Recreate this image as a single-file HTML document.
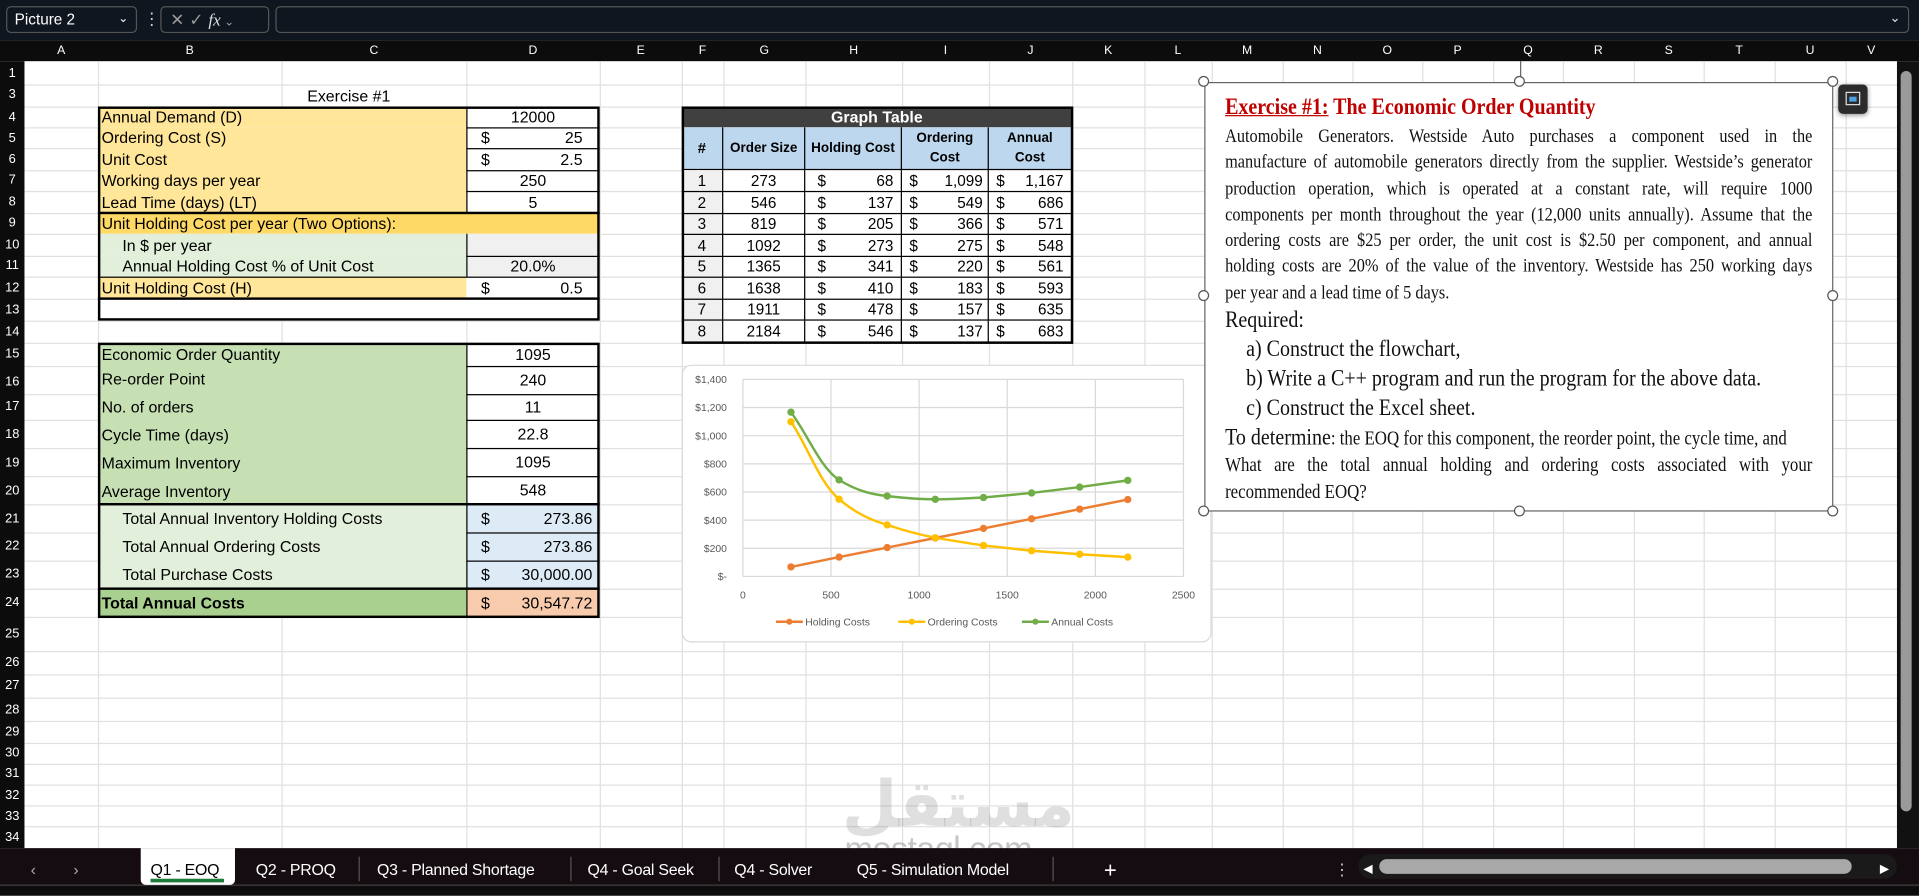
<!DOCTYPE html>
<html><head><meta charset="utf-8">
<style>
*{margin:0;padding:0;box-sizing:border-box}
body{width:1919px;height:896px;overflow:hidden;background:#fff;font-family:"Liberation Sans",Arial,sans-serif}
#w{position:absolute;left:0;top:0;width:1568px;height:732px;transform:scale(1.22385);transform-origin:0 0;background:#fff;overflow:hidden}
.a{position:absolute}
.vl{position:absolute;top:50px;height:643px;width:1px;background:#e0e0e0}
.hl{position:absolute;left:20px;width:1530px;height:1px;background:#e0e0e0}
.ch{position:absolute;top:33px;height:17px;color:#fff;font-size:10px;text-align:center;line-height:17px}
.rh{position:absolute;left:0;width:20px;color:#fff;font-size:10.5px;text-align:center}
.c{position:absolute;font-size:13px;color:#000;display:flex;align-items:center;padding:0 3px;white-space:nowrap;overflow:hidden}
.ctr{justify-content:center}
.cur{justify-content:space-between;padding:0 14px 0 12px}
.g{position:absolute;font-size:12.5px;display:flex;align-items:center;white-space:nowrap;border-right:1px solid #000;border-bottom:1px solid #000}
.j{text-align:justify;text-align-last:justify;width:558px}
.hd{position:absolute;width:9px;height:9px;border:1.5px solid #555;border-radius:50%;background:#fff}
.tab{position:absolute;top:700px;color:#fff;font-size:13px;height:22px;line-height:22px;letter-spacing:-0.2px}
</style></head><body><div id="w">

<div class="a" style="left:0;top:0;width:1568px;height:33px;background:#0f1620"></div>
<div class="a" style="left:5px;top:5px;width:107px;height:22px;border:1px solid #555;border-radius:4px;color:#fff;font-size:12.5px;line-height:20px;padding-left:6px">Picture 2<span style="position:absolute;right:6px;top:0;font-size:10px">&#8964;</span></div>
<div class="a" style="left:117px;top:7px;color:#ccc;font-size:14px">&#8942;</div>
<div class="a" style="left:131px;top:5px;width:89px;height:22px;border:1px solid #555;border-radius:4px;color:#999;font-size:14px;line-height:20px;padding-left:7px">✕ ✓ <i style="font-family:'Liberation Serif',serif;color:#ddd">fx</i><span style="font-size:10px"> &#8964;</span></div>
<div class="a" style="left:225px;top:5px;width:1335px;height:22px;border:1px solid #555;border-radius:4px"><span style="position:absolute;right:6px;top:2px;color:#ddd;font-size:11px">&#8964;</span></div>

<div class="a" style="left:0;top:33px;width:1568px;height:17px;background:#0c0c0c"></div>
<div class="a" style="left:0;top:50px;width:20px;height:643px;background:#0c0c0c"></div>
<div class="ch" style="left:20px;width:60px">A</div>
<div class="ch" style="left:80px;width:150px">B</div>
<div class="ch" style="left:230px;width:151px">C</div>
<div class="ch" style="left:381px;width:109px">D</div>
<div class="ch" style="left:490px;width:67px">E</div>
<div class="ch" style="left:557px;width:34px">F</div>
<div class="ch" style="left:591px;width:67px">G</div>
<div class="ch" style="left:658px;width:79px">H</div>
<div class="ch" style="left:737px;width:71px">I</div>
<div class="ch" style="left:808px;width:68px">J</div>
<div class="ch" style="left:876px;width:59px">K</div>
<div class="ch" style="left:935px;width:55px">L</div>
<div class="ch" style="left:990px;width:58px">M</div>
<div class="ch" style="left:1048px;width:57px">N</div>
<div class="ch" style="left:1105px;width:57px">O</div>
<div class="ch" style="left:1162px;width:58px">P</div>
<div class="ch" style="left:1220px;width:57px">Q</div>
<div class="ch" style="left:1277px;width:58px">R</div>
<div class="ch" style="left:1335px;width:57px">S</div>
<div class="ch" style="left:1392px;width:58px">T</div>
<div class="ch" style="left:1450px;width:58px">U</div>
<div class="ch" style="left:1508px;width:42px">V</div>

<div class="vl" style="left:80px"></div><div class="vl" style="left:230px"></div><div class="vl" style="left:381px"></div><div class="vl" style="left:490px"></div><div class="vl" style="left:557px"></div><div class="vl" style="left:591px"></div><div class="vl" style="left:658px"></div><div class="vl" style="left:737px"></div><div class="vl" style="left:808px"></div><div class="vl" style="left:876px"></div><div class="vl" style="left:935px"></div><div class="vl" style="left:990px"></div><div class="vl" style="left:1048px"></div><div class="vl" style="left:1105px"></div><div class="vl" style="left:1162px"></div><div class="vl" style="left:1220px"></div><div class="vl" style="left:1277px"></div><div class="vl" style="left:1335px"></div><div class="vl" style="left:1392px"></div><div class="vl" style="left:1450px"></div><div class="vl" style="left:1508px"></div>
<div class="hl" style="top:69px"></div><div class="hl" style="top:87px"></div><div class="hl" style="top:104px"></div><div class="hl" style="top:121px"></div><div class="hl" style="top:139px"></div><div class="hl" style="top:156px"></div><div class="hl" style="top:174px"></div><div class="hl" style="top:191px"></div><div class="hl" style="top:209px"></div><div class="hl" style="top:226px"></div><div class="hl" style="top:244px"></div><div class="hl" style="top:262px"></div><div class="hl" style="top:280px"></div><div class="hl" style="top:299px"></div><div class="hl" style="top:322px"></div><div class="hl" style="top:343px"></div><div class="hl" style="top:366px"></div><div class="hl" style="top:389px"></div><div class="hl" style="top:412px"></div><div class="hl" style="top:435px"></div><div class="hl" style="top:458px"></div><div class="hl" style="top:481px"></div><div class="hl" style="top:504px"></div><div class="hl" style="top:532px"></div><div class="hl" style="top:551px"></div><div class="hl" style="top:570px"></div><div class="hl" style="top:589px"></div><div class="hl" style="top:607px"></div><div class="hl" style="top:624px"></div><div class="hl" style="top:641px"></div><div class="hl" style="top:658px"></div><div class="hl" style="top:675px"></div>

<div class="rh" style="top:54px">1</div><div class="rh" style="top:71px">3</div><div class="rh" style="top:90px">4</div><div class="rh" style="top:107px">5</div><div class="rh" style="top:124px">6</div><div class="rh" style="top:141px">7</div><div class="rh" style="top:159px">8</div><div class="rh" style="top:176px">9</div><div class="rh" style="top:194px">10</div><div class="rh" style="top:211px">11</div><div class="rh" style="top:229px">12</div><div class="rh" style="top:247px">13</div><div class="rh" style="top:265px">14</div><div class="rh" style="top:283px">15</div><div class="rh" style="top:306px">16</div><div class="rh" style="top:326px">17</div><div class="rh" style="top:349px">18</div><div class="rh" style="top:372px">19</div><div class="rh" style="top:395px">20</div><div class="rh" style="top:418px">21</div><div class="rh" style="top:440px">22</div><div class="rh" style="top:463px">23</div><div class="rh" style="top:486px">24</div><div class="rh" style="top:512px">25</div><div class="rh" style="top:535px">26</div><div class="rh" style="top:554px">27</div><div class="rh" style="top:574px">28</div><div class="rh" style="top:592px">29</div><div class="rh" style="top:609px">30</div><div class="rh" style="top:626px">31</div><div class="rh" style="top:644px">32</div><div class="rh" style="top:661px">33</div><div class="rh" style="top:678px">34</div>

<div class="c ctr" style="left:80px;top:69px;width:410px;height:18px">Exercise #1</div>

<div class="a" style="left:80px;top:87px;width:410px;height:175px;background:#fff"></div>
<div class="c" style="left:80px;top:87px;width:301px;height:17px;background:#ffe699">Annual Demand (D)</div>
<div class="c" style="left:80px;top:104px;width:301px;height:17px;background:#ffe699">Ordering Cost (S)</div>
<div class="c" style="left:80px;top:121px;width:301px;height:18px;background:#ffe699">Unit Cost</div>
<div class="c" style="left:80px;top:139px;width:301px;height:17px;background:#ffe699">Working days per year</div>
<div class="c" style="left:80px;top:156px;width:301px;height:18px;background:#ffe699">Lead Time (days) (LT)</div>
<div class="c" style="left:80px;top:174px;width:410px;height:17px;background:#ffd966">Unit Holding Cost per year (Two Options):</div>
<div class="c" style="left:80px;top:191px;width:301px;height:18px;background:#e2efda;padding-left:20px">In $ per year</div>
<div class="c" style="left:80px;top:209px;width:301px;height:17px;background:#e2efda;padding-left:20px">Annual Holding Cost % of Unit Cost</div>
<div class="c" style="left:80px;top:226px;width:301px;height:18px;background:#ffe699">Unit Holding Cost (H)</div>
<div class="c ctr" style="left:381px;top:87px;width:109px;height:17px">12000</div>
<div class="c cur" style="left:381px;top:104px;width:109px;height:17px"><span>$</span><span>25</span></div>
<div class="c cur" style="left:381px;top:121px;width:109px;height:18px"><span>$</span><span>2.5</span></div>
<div class="c ctr" style="left:381px;top:139px;width:109px;height:17px">250</div>
<div class="c ctr" style="left:381px;top:156px;width:109px;height:18px">5</div>
<div class="c" style="left:381px;top:191px;width:109px;height:18px;background:#f0f0f0"></div>
<div class="c ctr" style="left:381px;top:209px;width:109px;height:17px;background:#f0f0f0">20.0%</div>
<div class="c cur" style="left:381px;top:226px;width:109px;height:18px"><span>$</span><span>0.5</span></div>
<div class="a" style="left:381px;top:87px;width:1px;height:87px;background:#000"></div>
<div class="a" style="left:381px;top:191px;width:1px;height:35px;background:#000"></div>
<div class="a" style="left:381px;top:104px;width:109px;height:1px;background:#000"></div>
<div class="a" style="left:381px;top:121px;width:109px;height:1px;background:#000"></div>
<div class="a" style="left:381px;top:139px;width:109px;height:1px;background:#000"></div>
<div class="a" style="left:381px;top:156px;width:109px;height:1px;background:#000"></div>
<div class="a" style="left:80px;top:173px;width:410px;height:2px;background:#000"></div>
<div class="a" style="left:381px;top:209px;width:109px;height:1px;background:#000"></div>
<div class="a" style="left:80px;top:226px;width:410px;height:1px;background:#000"></div>
<div class="a" style="left:80px;top:243px;width:410px;height:2px;background:#000"></div>
<div class="a" style="left:80px;top:87px;width:410px;height:175px;border:2px solid #000"></div>

<div class="a" style="left:80px;top:280px;width:301px;height:132px;background:#c6e0b4"></div>
<div class="c" style="left:80px;top:280px;width:301px;height:19px">Economic Order Quantity</div>
<div class="c" style="left:80px;top:299px;width:301px;height:20px">Re-order Point</div>
<div class="c" style="left:80px;top:322px;width:301px;height:20px">No. of orders</div>
<div class="c" style="left:80px;top:345px;width:301px;height:20px">Cycle Time (days)</div>
<div class="c" style="left:80px;top:368px;width:301px;height:20px">Maximum Inventory</div>
<div class="c" style="left:80px;top:391px;width:301px;height:20px">Average Inventory</div>
<div class="c ctr" style="left:381px;top:280px;width:109px;height:19px">1095</div>
<div class="c ctr" style="left:381px;top:299px;width:109px;height:23px">240</div>
<div class="c ctr" style="left:381px;top:322px;width:109px;height:21px">11</div>
<div class="c ctr" style="left:381px;top:343px;width:109px;height:23px">22.8</div>
<div class="c ctr" style="left:381px;top:366px;width:109px;height:23px">1095</div>
<div class="c ctr" style="left:381px;top:389px;width:109px;height:23px">548</div>
<div class="a" style="left:80px;top:412px;width:301px;height:69px;background:#e2efda"></div>
<div class="c" style="left:80px;top:412px;width:301px;height:22px;padding-left:20px">Total Annual Inventory Holding Costs</div>
<div class="c" style="left:80px;top:435px;width:301px;height:22px;padding-left:20px">Total Annual Ordering Costs</div>
<div class="c" style="left:80px;top:458px;width:301px;height:22px;padding-left:20px">Total Purchase Costs</div>
<div class="c cur" style="left:381px;top:412px;width:109px;height:23px;background:#ddebf7;padding-right:6px"><span>$</span><span>273.86</span></div>
<div class="c cur" style="left:381px;top:435px;width:109px;height:23px;background:#ddebf7;padding-right:6px"><span>$</span><span>273.86</span></div>
<div class="c cur" style="left:381px;top:458px;width:109px;height:23px;background:#ddebf7;padding-right:6px"><span>$</span><span>30,000.00</span></div>
<div class="c" style="left:80px;top:481px;width:301px;height:23px;background:#a9d08e;font-weight:bold">Total Annual Costs</div>
<div class="c cur" style="left:381px;top:481px;width:109px;height:23px;background:#f8cbad;padding-right:6px"><span>$</span><span>30,547.72</span></div>
<div class="a" style="left:381px;top:280px;width:1px;height:224px;background:#000"></div>
<div class="a" style="left:381px;top:299px;width:109px;height:1px;background:#000"></div>
<div class="a" style="left:381px;top:322px;width:109px;height:1px;background:#000"></div>
<div class="a" style="left:381px;top:343px;width:109px;height:1px;background:#000"></div>
<div class="a" style="left:381px;top:366px;width:109px;height:1px;background:#000"></div>
<div class="a" style="left:381px;top:389px;width:109px;height:1px;background:#000"></div>
<div class="a" style="left:80px;top:411px;width:410px;height:2px;background:#000"></div>
<div class="a" style="left:381px;top:435px;width:109px;height:1px;background:#000"></div>
<div class="a" style="left:381px;top:458px;width:109px;height:1px;background:#000"></div>
<div class="a" style="left:80px;top:480px;width:410px;height:2px;background:#000"></div>
<div class="a" style="left:80px;top:280px;width:410px;height:225px;border:2px solid #000"></div>

<div class="a" style="left:557px;top:87px;width:319px;height:193px;background:#fff"></div>
<div class="a" style="left:557px;top:87px;width:319px;height:17px;background:#404040;color:#fff;font-weight:bold;font-size:13px;text-align:center;line-height:17px">Graph Table</div>
<div class="a" style="left:557px;top:104px;width:319px;height:35px;background:#bdd7ee"></div>
<div class="g" style="left:557px;top:104px;width:34px;height:35px;justify-content:center;font-weight:bold;font-size:12px">#</div>
<div class="g" style="left:591px;top:104px;width:67px;height:35px;justify-content:center;font-weight:bold;font-size:11px">Order Size</div>
<div class="g" style="left:658px;top:104px;width:79px;height:35px;justify-content:center;font-weight:bold;font-size:11px">Holding Cost</div>
<div class="g" style="left:737px;top:104px;width:71px;height:35px;justify-content:center;font-weight:bold;font-size:11px;text-align:center;white-space:normal;line-height:16px">Ordering Cost</div>
<div class="g" style="left:808px;top:104px;width:68px;height:35px;justify-content:center;font-weight:bold;font-size:11px;text-align:center;white-space:normal;line-height:16px;padding:0 12px">Annual Cost</div>

<div class="a" style="left:557px;top:139px;width:34px;height:141px;background:#f0f0f0"></div>
<div class="g" style="left:557px;top:139px;width:34px;height:18px;justify-content:center">1</div><div class="g" style="left:591px;top:139px;width:67px;height:18px;justify-content:center">273</div><div class="g" style="left:658px;top:139px;width:79px;height:18px;justify-content:space-between;padding:0 6px 0 10px"><span>$</span><span>68</span></div><div class="g" style="left:737px;top:139px;width:71px;height:18px;justify-content:space-between;padding:0 4px 0 6px"><span>$</span><span>1,099</span></div><div class="g" style="left:808px;top:139px;width:68px;height:18px;justify-content:space-between;padding:0 6px 0 6px"><span>$</span><span>1,167</span></div>
<div class="g" style="left:557px;top:157px;width:34px;height:18px;justify-content:center">2</div><div class="g" style="left:591px;top:157px;width:67px;height:18px;justify-content:center">546</div><div class="g" style="left:658px;top:157px;width:79px;height:18px;justify-content:space-between;padding:0 6px 0 10px"><span>$</span><span>137</span></div><div class="g" style="left:737px;top:157px;width:71px;height:18px;justify-content:space-between;padding:0 4px 0 6px"><span>$</span><span>549</span></div><div class="g" style="left:808px;top:157px;width:68px;height:18px;justify-content:space-between;padding:0 6px 0 6px"><span>$</span><span>686</span></div>
<div class="g" style="left:557px;top:175px;width:34px;height:17px;justify-content:center">3</div><div class="g" style="left:591px;top:175px;width:67px;height:17px;justify-content:center">819</div><div class="g" style="left:658px;top:175px;width:79px;height:17px;justify-content:space-between;padding:0 6px 0 10px"><span>$</span><span>205</span></div><div class="g" style="left:737px;top:175px;width:71px;height:17px;justify-content:space-between;padding:0 4px 0 6px"><span>$</span><span>366</span></div><div class="g" style="left:808px;top:175px;width:68px;height:17px;justify-content:space-between;padding:0 6px 0 6px"><span>$</span><span>571</span></div>
<div class="g" style="left:557px;top:192px;width:34px;height:18px;justify-content:center">4</div><div class="g" style="left:591px;top:192px;width:67px;height:18px;justify-content:center">1092</div><div class="g" style="left:658px;top:192px;width:79px;height:18px;justify-content:space-between;padding:0 6px 0 10px"><span>$</span><span>273</span></div><div class="g" style="left:737px;top:192px;width:71px;height:18px;justify-content:space-between;padding:0 4px 0 6px"><span>$</span><span>275</span></div><div class="g" style="left:808px;top:192px;width:68px;height:18px;justify-content:space-between;padding:0 6px 0 6px"><span>$</span><span>548</span></div>
<div class="g" style="left:557px;top:210px;width:34px;height:17px;justify-content:center">5</div><div class="g" style="left:591px;top:210px;width:67px;height:17px;justify-content:center">1365</div><div class="g" style="left:658px;top:210px;width:79px;height:17px;justify-content:space-between;padding:0 6px 0 10px"><span>$</span><span>341</span></div><div class="g" style="left:737px;top:210px;width:71px;height:17px;justify-content:space-between;padding:0 4px 0 6px"><span>$</span><span>220</span></div><div class="g" style="left:808px;top:210px;width:68px;height:17px;justify-content:space-between;padding:0 6px 0 6px"><span>$</span><span>561</span></div>
<div class="g" style="left:557px;top:227px;width:34px;height:18px;justify-content:center">6</div><div class="g" style="left:591px;top:227px;width:67px;height:18px;justify-content:center">1638</div><div class="g" style="left:658px;top:227px;width:79px;height:18px;justify-content:space-between;padding:0 6px 0 10px"><span>$</span><span>410</span></div><div class="g" style="left:737px;top:227px;width:71px;height:18px;justify-content:space-between;padding:0 4px 0 6px"><span>$</span><span>183</span></div><div class="g" style="left:808px;top:227px;width:68px;height:18px;justify-content:space-between;padding:0 6px 0 6px"><span>$</span><span>593</span></div>
<div class="g" style="left:557px;top:245px;width:34px;height:17px;justify-content:center">7</div><div class="g" style="left:591px;top:245px;width:67px;height:17px;justify-content:center">1911</div><div class="g" style="left:658px;top:245px;width:79px;height:17px;justify-content:space-between;padding:0 6px 0 10px"><span>$</span><span>478</span></div><div class="g" style="left:737px;top:245px;width:71px;height:17px;justify-content:space-between;padding:0 4px 0 6px"><span>$</span><span>157</span></div><div class="g" style="left:808px;top:245px;width:68px;height:17px;justify-content:space-between;padding:0 6px 0 6px"><span>$</span><span>635</span></div>
<div class="g" style="left:557px;top:262px;width:34px;height:18px;justify-content:center">8</div><div class="g" style="left:591px;top:262px;width:67px;height:18px;justify-content:center">2184</div><div class="g" style="left:658px;top:262px;width:79px;height:18px;justify-content:space-between;padding:0 6px 0 10px"><span>$</span><span>546</span></div><div class="g" style="left:737px;top:262px;width:71px;height:18px;justify-content:space-between;padding:0 4px 0 6px"><span>$</span><span>137</span></div><div class="g" style="left:808px;top:262px;width:68px;height:18px;justify-content:space-between;padding:0 6px 0 6px"><span>$</span><span>683</span></div>
<div class="a" style="left:557px;top:87px;width:320px;height:194px;border:2px solid #000"></div>

<div class="a" style="left:557px;top:298px;width:433px;height:227px;background:#fff;border:1px solid #d9d9d9;border-radius:8px"></div>
<svg class="a" style="left:0;top:0" width="1568" height="732" viewBox="0 0 1568 732">
<g stroke="#d9d9d9" stroke-width="1">
<line x1="607" y1="310" x2="967" y2="310"/><line x1="607" y1="333" x2="967" y2="333"/><line x1="607" y1="356" x2="967" y2="356"/><line x1="607" y1="379" x2="967" y2="379"/><line x1="607" y1="402" x2="967" y2="402"/><line x1="607" y1="425" x2="967" y2="425"/><line x1="607" y1="448" x2="967" y2="448"/><line x1="607" y1="471" x2="967" y2="471"/>
<line x1="607" y1="310" x2="607" y2="471"/><line x1="679" y1="310" x2="679" y2="471"/><line x1="751" y1="310" x2="751" y2="471"/><line x1="823" y1="310" x2="823" y2="471"/><line x1="895" y1="310" x2="895" y2="471"/><line x1="967" y1="310" x2="967" y2="471"/>
</g>
<g font-family="Liberation Sans, sans-serif" font-size="8.5" fill="#595959" text-anchor="end">
<text x="594" y="313">$1,400</text><text x="594" y="336">$1,200</text><text x="594" y="359">$1,000</text><text x="594" y="382">$800</text><text x="594" y="405">$600</text><text x="594" y="428">$400</text><text x="594" y="451">$200</text><text x="594" y="474">$-</text>
</g>
<g font-family="Liberation Sans, sans-serif" font-size="8.5" fill="#595959" text-anchor="middle">
<text x="607" y="489">0</text><text x="679" y="489">500</text><text x="751" y="489">1000</text><text x="823" y="489">1500</text><text x="895" y="489">2000</text><text x="967" y="489">2500</text>
</g>
<g fill="none" stroke-width="2">
<path stroke="#ed7d31" d="M646.3,463.2 L685.6,455.2 L724.9,447.4 L764.2,439.6 L803.6,431.8 L842.9,423.9 L882.2,416 L921.5,408.2"/>
<path stroke="#ffc000" d="M646.3,344.6 C660,365 670,395 685.6,407.9 C700,420 712,425 724.9,428.9 C740,434 752,437 764.2,439.4 C780,442 792,444 803.6,445.7 L842.9,450 L882.2,452.9 L921.5,455.2"/>
<path stroke="#70ad47" d="M646.3,336.8 C660,355 670,382 685.6,392.1 C700,401 712,404 724.9,405.3 C740,407 752,408 764.2,408 C780,408 792,407 803.6,406.5 L842.9,402.8 L882.2,398 L921.5,392.5"/>
</g>
<g fill="#ed7d31"><circle cx="646.3" cy="463.2" r="3"/><circle cx="685.6" cy="455.2" r="3"/><circle cx="724.9" cy="447.4" r="3"/><circle cx="764.2" cy="439.6" r="3"/><circle cx="803.6" cy="431.8" r="3"/><circle cx="842.9" cy="423.9" r="3"/><circle cx="882.2" cy="416" r="3"/><circle cx="921.5" cy="408.2" r="3"/></g>
<g fill="#ffc000"><circle cx="646.3" cy="344.6" r="3"/><circle cx="685.6" cy="407.9" r="3"/><circle cx="724.9" cy="428.9" r="3"/><circle cx="764.2" cy="439.4" r="3"/><circle cx="803.6" cy="445.7" r="3"/><circle cx="842.9" cy="450" r="3"/><circle cx="882.2" cy="452.9" r="3"/><circle cx="921.5" cy="455.2" r="3"/></g>
<g fill="#70ad47"><circle cx="646.3" cy="336.8" r="3"/><circle cx="685.6" cy="392.1" r="3"/><circle cx="724.9" cy="405.3" r="3"/><circle cx="764.2" cy="408" r="3"/><circle cx="803.6" cy="406.5" r="3"/><circle cx="842.9" cy="402.8" r="3"/><circle cx="882.2" cy="398" r="3"/><circle cx="921.5" cy="392.5" r="3"/></g>
<line x1="634" y1="508" x2="656" y2="508" stroke="#ed7d31" stroke-width="2"/><circle cx="645" cy="508" r="2.5" fill="#ed7d31"/>
<line x1="734" y1="508" x2="756" y2="508" stroke="#ffc000" stroke-width="2"/><circle cx="745" cy="508" r="2.5" fill="#ffc000"/>
<line x1="835" y1="508" x2="857" y2="508" stroke="#70ad47" stroke-width="2"/><circle cx="846" cy="508" r="2.5" fill="#70ad47"/>
<g font-family="Liberation Sans, sans-serif" font-size="8.5" fill="#595959">
<text x="658" y="511">Holding Costs</text><text x="758" y="511">Ordering Costs</text><text x="859" y="511">Annual Costs</text>
</g>
</svg>

<div class="a" style="left:984px;top:67px;width:514px;height:351px;background:#fff;border:1px solid #666"></div>
<div class="a" style="left:1242px;top:50px;width:1px;height:17px;background:#666"></div>
<div class="hd" style="left:979px;top:62px"></div><div class="hd" style="left:1237px;top:62px"></div><div class="hd" style="left:1493px;top:62px"></div>
<div class="hd" style="left:979px;top:237px"></div><div class="hd" style="left:1493px;top:237px"></div>
<div class="hd" style="left:979px;top:413px"></div><div class="hd" style="left:1237px;top:413px"></div><div class="hd" style="left:1493px;top:413px"></div>
<div class="a" style="left:1502px;top:69px;width:24px;height:24px;background:#2b2b2b;border-radius:4px;box-shadow:0 1px 4px rgba(0,0,0,.4)"><div style="position:absolute;left:6px;top:6px;width:12px;height:11px;border:1px solid #ddd"></div><div style="position:absolute;left:9px;top:10px;width:6px;height:4px;background:#4aa3e0"></div></div>
<div class="a" style="left:1001px;top:77px;transform:scaleX(0.86);transform-origin:0 0;font-family:'Liberation Serif',serif;color:#111;width:558px">
<div style="font-size:19px;font-weight:bold;color:#c00000;height:24px;white-space:nowrap"><span style="text-decoration:underline">Exercise #1:</span> The Economic Order Quantity</div>
<div style="font-size:15.5px;line-height:21.3px">
<div class="j">Automobile Generators. Westside Auto purchases a component used in the</div>
<div class="j">manufacture of automobile generators directly from the supplier. Westside’s generator</div>
<div class="j">production operation, which is operated at a constant rate, will require 1000</div>
<div class="j">components per month throughout the year (12,000 units annually). Assume that the</div>
<div class="j">ordering costs are $25 per order, the unit cost is $2.50 per component, and annual</div>
<div class="j">holding costs are 20% of the value of the inventory. Westside has 250 working days</div>
<div>per year and a lead time of 5 days.</div>
</div>
<div style="font-size:19px;line-height:24px">Required:</div>
<div style="font-size:19px;line-height:24px;padding-left:20px">a) Construct the flowchart,</div>
<div style="font-size:19px;line-height:24px;padding-left:20px">b) Write a C++ program and run the program for the above data.</div>
<div style="font-size:19px;line-height:24px;padding-left:20px">c) Construct the Excel sheet.</div>
<div style="font-size:16px;line-height:23px;white-space:nowrap"><span style="font-size:19px">To determine</span>: the EOQ for this component, the reorder point, the cycle time, and</div>
<div class="j" style="font-size:16px;line-height:22px">What are the total annual holding and ordering costs associated with your</div>
<div style="font-size:16px;line-height:22px">recommended EOQ?</div>
</div>

<div class="a" style="left:1550px;top:50px;width:18px;height:643px;background:#111"></div>
<div class="a" style="left:1553px;top:58px;width:9px;height:605px;background:#9a9a9a;border-radius:5px"></div>

<div class="a" style="left:688px;top:618px;font-family:'Noto Sans CJK SC','DejaVu Sans',sans-serif;font-size:52px;font-weight:bold;color:rgba(140,140,140,.28);line-height:70px">مستقل</div>
<div class="a" style="left:690px;top:678px;font-size:28px;color:rgba(140,140,140,.5);letter-spacing:-0.5px">mostaql.com</div>

<div class="a" style="left:0;top:693px;width:1568px;height:30px;background:#140c10"></div>
<div class="a" style="left:0;top:723px;width:1568px;height:9px;background:#0c0c0c;border-top:1px solid #333"></div>
<div class="tab" style="left:25px;color:#aaa">&#8249;</div><div class="tab" style="left:60px;color:#aaa">&#8250;</div>
<div class="a" style="left:115px;top:693px;width:77px;height:30px;background:#fff;border-radius:0 0 4px 4px"></div>
<div class="tab" style="left:123px;color:#000">Q1 - EOQ</div>
<div class="a" style="left:123px;top:718px;width:60px;height:3px;background:#1e7b3c"></div>
<div class="tab" style="left:209px">Q2 - PROQ</div>
<div class="a" style="left:293px;top:700px;width:1px;height:20px;background:#555"></div>
<div class="tab" style="left:308px">Q3 - Planned Shortage</div>
<div class="a" style="left:466px;top:700px;width:1px;height:20px;background:#555"></div>
<div class="tab" style="left:480px">Q4 - Goal Seek</div>
<div class="a" style="left:587px;top:700px;width:1px;height:20px;background:#555"></div>
<div class="tab" style="left:600px">Q4 - Solver</div>
<div class="tab" style="left:700px">Q5 - Simulation Model</div>
<div class="a" style="left:860px;top:700px;width:1px;height:20px;background:#555"></div>
<div class="tab" style="left:902px;font-size:18px">+</div>
<div class="tab" style="left:1090px;color:#ccc">&#8942;</div>
<div class="a" style="left:1110px;top:698px;width:440px;height:20px;background:#1a1a1a;border-radius:10px"></div>
<div class="a" style="left:1127px;top:702px;width:386px;height:12px;background:#a8a8a8;border-radius:6px"></div>
<div class="tab" style="left:1114px;font-size:10px">&#9664;</div><div class="tab" style="left:1536px;font-size:10px">&#9654;</div>
</div></body></html>
